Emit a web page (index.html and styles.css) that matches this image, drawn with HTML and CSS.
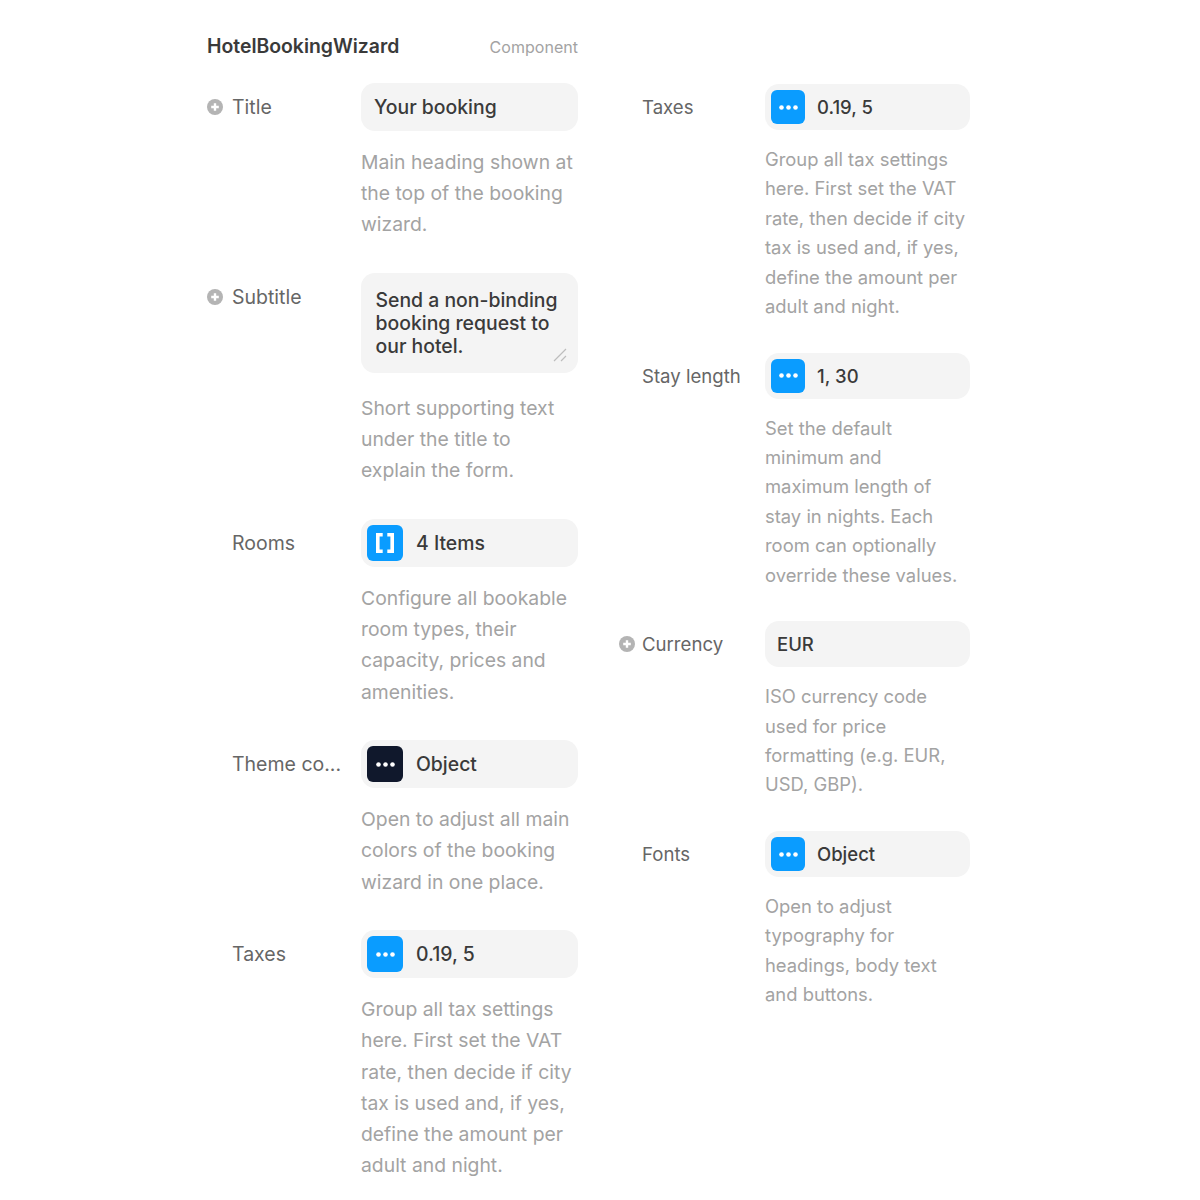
FILE: index.html
```html
<!DOCTYPE html>
<html lang="en">
<head>
<meta charset="utf-8">
<title>HotelBookingWizard</title>
<link rel="stylesheet" href="styles.css">
</head>
<body>
<main class="page">
  <section class="col col-left">
    <header class="head"><span class="name">HotelBookingWizard</span><span class="kind">Component</span></header>
    <div class="row">
      <div class="label"><svg class="plus" viewBox="0 0 16 16"><circle cx="8" cy="8" r="8" fill="#b4b4b4"/><path d="M8 4.2v7.6M4.2 8h7.6" stroke="#fff" stroke-width="2.4"/></svg>Title</div>
      <div class="body"><div class="field plain">Your booking</div><p class="desc">Main heading shown at the top of the booking wizard.</p></div>
    </div>
    <div class="row">
      <div class="label"><svg class="plus" viewBox="0 0 16 16"><circle cx="8" cy="8" r="8" fill="#b4b4b4"/><path d="M8 4.2v7.6M4.2 8h7.6" stroke="#fff" stroke-width="2.4"/></svg>Subtitle</div>
      <div class="body"><div class="field area">Send a non-binding booking request to our hotel.<svg class="grip" viewBox="0 0 14 14"><path d="M1 13 13 1M8 13l5-5" stroke="#bdbdbd" stroke-width="1.2" fill="none"/></svg></div><p class="desc desc-area">Short supporting text under the title to explain the form.</p></div>
    </div>
    <div class="row">
      <div class="label">Rooms</div>
      <div class="body"><div class="field"><span class="badge"><svg class="brackets" viewBox="0 0 18 20"><path d="M6.7 1.8H1.8v16.4h4.9M11.3 1.8h4.9v16.4h-4.9" stroke="#fff" stroke-width="3.6" fill="none"/></svg></span>4 Items</div><p class="desc">Configure all bookable room types, their capacity, prices and amenities.</p></div>
    </div>
    <div class="row">
      <div class="label"><span class="clip">Theme co...</span></div>
      <div class="body"><div class="field"><span class="badge dark"><svg class="dots" viewBox="0 0 19 5"><circle cx="2.5" cy="2.5" r="2.3" fill="#fff"/><circle cx="9.5" cy="2.5" r="2.3" fill="#fff"/><circle cx="16.5" cy="2.5" r="2.3" fill="#fff"/></svg></span>Object</div><p class="desc">Open to adjust all main colors of the booking wizard in one place.</p></div>
    </div>
    <div class="row">
      <div class="label">Taxes</div>
      <div class="body"><div class="field"><span class="badge"><svg class="dots" viewBox="0 0 19 5"><circle cx="2.5" cy="2.5" r="2.3" fill="#fff"/><circle cx="9.5" cy="2.5" r="2.3" fill="#fff"/><circle cx="16.5" cy="2.5" r="2.3" fill="#fff"/></svg></span>0.19, 5</div><p class="desc">Group all tax settings here. First set the VAT rate, then decide if city tax is used and, if yes, define the amount per adult and night.</p></div>
    </div>
  </section>
  <section class="col col-right">
    <div class="row">
      <div class="label">Taxes</div>
      <div class="body"><div class="field"><span class="badge"><svg class="dots" viewBox="0 0 19 5"><circle cx="2.5" cy="2.5" r="2.3" fill="#fff"/><circle cx="9.5" cy="2.5" r="2.3" fill="#fff"/><circle cx="16.5" cy="2.5" r="2.3" fill="#fff"/></svg></span>0.19, 5</div><p class="desc">Group all tax settings here. First set the VAT rate, then decide if city tax is used and, if yes, define the amount per adult and night.</p></div>
    </div>
    <div class="row">
      <div class="label">Stay length</div>
      <div class="body"><div class="field"><span class="badge"><svg class="dots" viewBox="0 0 19 5"><circle cx="2.5" cy="2.5" r="2.3" fill="#fff"/><circle cx="9.5" cy="2.5" r="2.3" fill="#fff"/><circle cx="16.5" cy="2.5" r="2.3" fill="#fff"/></svg></span>1, 30</div><p class="desc">Set the default minimum and maximum length of stay in nights. Each room can optionally override these values.</p></div>
    </div>
    <div class="row">
      <div class="label"><svg class="plus" viewBox="0 0 16 16"><circle cx="8" cy="8" r="8" fill="#b4b4b4"/><path d="M8 4.2v7.6M4.2 8h7.6" stroke="#fff" stroke-width="2.4"/></svg>Currency</div>
      <div class="body"><div class="field plain">EUR</div><p class="desc">ISO currency code used for price formatting (e.g. EUR, USD, GBP).</p></div>
    </div>
    <div class="row">
      <div class="label">Fonts</div>
      <div class="body"><div class="field"><span class="badge"><svg class="dots" viewBox="0 0 19 5"><circle cx="2.5" cy="2.5" r="2.3" fill="#fff"/><circle cx="9.5" cy="2.5" r="2.3" fill="#fff"/><circle cx="16.5" cy="2.5" r="2.3" fill="#fff"/></svg></span>Object</div><p class="desc">Open to adjust typography for headings, body text and buttons.</p></div>
    </div>
  </section>
</main>
</body>
</html>
```
FILE: styles.css
```css
* { box-sizing: border-box; }
html, body { margin: 0; padding: 0; background: #fff; }
body { font-family: Inter, "Liberation Sans", sans-serif; overflow: hidden; height: 1200px; }
.page { display: flex; align-items: flex-start; padding-left: 207px; gap: 41px; }
.col { display: flex; flex-direction: column; }
.col-left { width: 371px; }
.col-right { width: 351px; padding-top: 84px; }
.head { height: 83px; padding-top: 33px; display: flex; justify-content: space-between; align-items: flex-start; }
.name { font-size: 19.4px; font-weight: 600; line-height: 26px; color: #3a3a3a; }
.kind { font-size: 16px; letter-spacing: 0.03px; line-height: 28px; color: #a3a3a3; }
.row { display: flex; align-items: flex-start; }
.label { position: relative; color: #666; line-height: 24px; white-space: nowrap; }
.col-left .label { width: 154px; padding: 12px 0 0 25px; font-size: 19.5px; }
.col-right .label { width: 146px; padding: 11px 0 0 23px; font-size: 18.6px; }
.plus { position: absolute; left: 0; width: 16px; height: 16px; top: 16px; }
.col-right .plus { top: 15px; }
.body { flex: 1; min-width: 0; }
.col-left .row { padding-bottom: 32.4px; }
.col-right .row { padding-bottom: 31.2px; }
.field { display: flex; align-items: center; background: #f4f4f4; color: #3a3a3a; font-weight: 500; border-radius: 14px; }
.col-left .field { height: 48px; padding-left: 6px; gap: 13px; font-size: 19.4px; }
.col-right .field { height: 46px; padding-left: 6px; gap: 12px; font-size: 18.5px; }
.col-left .field.plain { padding-left: 13px; }
.col-right .field.plain { padding-left: 12px; }
.col-left .field.area { position: relative; display: block; height: 100px; padding: 16px 14px 0 14.5px; line-height: 23px; }
.grip { position: absolute; right: 11px; bottom: 11px; width: 14px; height: 14px; }
.badge { display: flex; align-items: center; justify-content: center; flex: none; background: #0a9cff; border-radius: 6px; }
.col-left .badge { width: 36px; height: 36px; }
.col-right .badge { width: 34px; height: 34px; }
.col-left .badge.dark { background: #10182c; }
.dots { width: 19px; height: 5px; }
.brackets { width: 18px; height: 20px; }
.desc { margin: 0; color: #a3a3a3; }
.col-left .desc { margin-top: 16px; font-size: 19.35px; line-height: 31.2px; }
.col-left .desc.desc-area { margin-top: 20px; }
.col-right .desc { margin-top: 15px; font-size: 18.4px; line-height: 29.4px; }
```
